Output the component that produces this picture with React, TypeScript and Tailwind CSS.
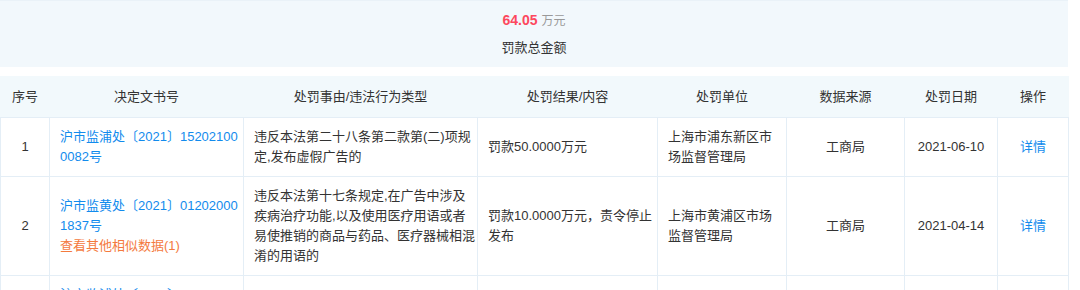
type Row = {
  no: number;
  doc: string[];
  similar?: string;
  reason: string[];
  result: string[];
  org: string[];
  source: string;
  date: string;
};

const rows: Row[] = [
  {
    no: 1,
    doc: ["沪市监浦处〔2021〕15202100", "0082号"],
    reason: ["违反本法第二十八条第二款第(二)项规", "定,发布虚假广告的"],
    result: ["罚款50.0000万元"],
    org: ["上海市浦东新区市", "场监督管理局"],
    source: "工商局",
    date: "2021-06-10",
  },
  {
    no: 2,
    doc: ["沪市监黄处〔2021〕01202000", "1837号"],
    similar: "查看其他相似数据(1)",
    reason: [
      "违反本法第十七条规定,在广告中涉及",
      "疾病治疗功能,以及使用医疗用语或者",
      "易使推销的商品与药品、医疗器械相混",
      "淆的用语的",
    ],
    result: ["罚款10.0000万元，责令停止", "发布"],
    org: ["上海市黄浦区市场", "监督管理局"],
    source: "工商局",
    date: "2021-04-14",
  },
  {
    no: 3,
    doc: ["沪市监浦处〔2020〕15202000", "1163号"],
    similar: "查看其他相似数据(2)",
    reason: ["违反本法第二十八条规定,发布虚假广", "告的"],
    result: ["罚款4.0000万元"],
    org: ["上海市浦东新区市", "场监督管理局"],
    source: "工商局",
    date: "2020-11-25",
  },
];

const Lines = ({ lines }: { lines: string[] }) => (
  <>
    {lines.map((l, i) => (
      <div key={i} className="whitespace-nowrap">
        {l}
      </div>
    ))}
  </>
);

const th = "bg-[#f2f9fc] border border-[#f2f9fc] border-b-[#e4eef6] px-[10px] py-[10px] font-normal text-center";
const td = "border border-[#e4eef6] px-[10px] py-[9px] align-middle";

export default function App() {
  return (
    <div
      className="w-[1068px] bg-white text-[13px] leading-5 text-[#333]"
      style={{ fontFamily: '"Liberation Sans", "Noto Sans CJK SC", sans-serif' }}
    >
      <div className="flex h-[67px] flex-col items-center border-t border-[#eaf2f8] bg-[#f2f8fc] pt-[9px]">
        <div className="leading-5">
          <span className="text-[14px] font-bold text-[#fd485e]">64.05</span>
          <span className="ml-1 text-[12px] text-[#999]">万元</span>
        </div>
        <div className="mt-[7px] leading-5">罚款总金额</div>
      </div>

      <table className="mt-[9px] w-full table-fixed border-collapse">
        <colgroup>
          <col className="w-[49px]" />
          <col className="w-[194px]" />
          <col className="w-[234px]" />
          <col className="w-[180px]" />
          <col className="w-[129px]" />
          <col className="w-[118px]" />
          <col className="w-[93px]" />
          <col className="w-[71px]" />
        </colgroup>
        <thead>
          <tr>
            <th className={th}>序号</th>
            <th className={th}>决定文书号</th>
            <th className={th}>处罚事由/违法行为类型</th>
            <th className={th}>处罚结果/内容</th>
            <th className={th}>处罚单位</th>
            <th className={th}>数据来源</th>
            <th className={th}>处罚日期</th>
            <th className={th}>操作</th>
          </tr>
        </thead>
        <tbody>
          {rows.map((r) => (
            <tr key={r.no}>
              <td className={`${td} text-center`}>{r.no}</td>
              <td className={`${td} text-[#128bed]`}>
                <Lines lines={r.doc} />
                {r.similar && <div className="text-[#f47a3e]">{r.similar}</div>}
              </td>
              <td className={td}>
                <Lines lines={r.reason} />
              </td>
              <td className={td}>
                <Lines lines={r.result} />
              </td>
              <td className={td}>
                <Lines lines={r.org} />
              </td>
              <td className={`${td} text-center`}>{r.source}</td>
              <td className={`${td} text-center`}>{r.date}</td>
              <td className={`${td} text-center text-[#128bed]`}>详情</td>
            </tr>
          ))}
        </tbody>
      </table>
    </div>
  );
}
